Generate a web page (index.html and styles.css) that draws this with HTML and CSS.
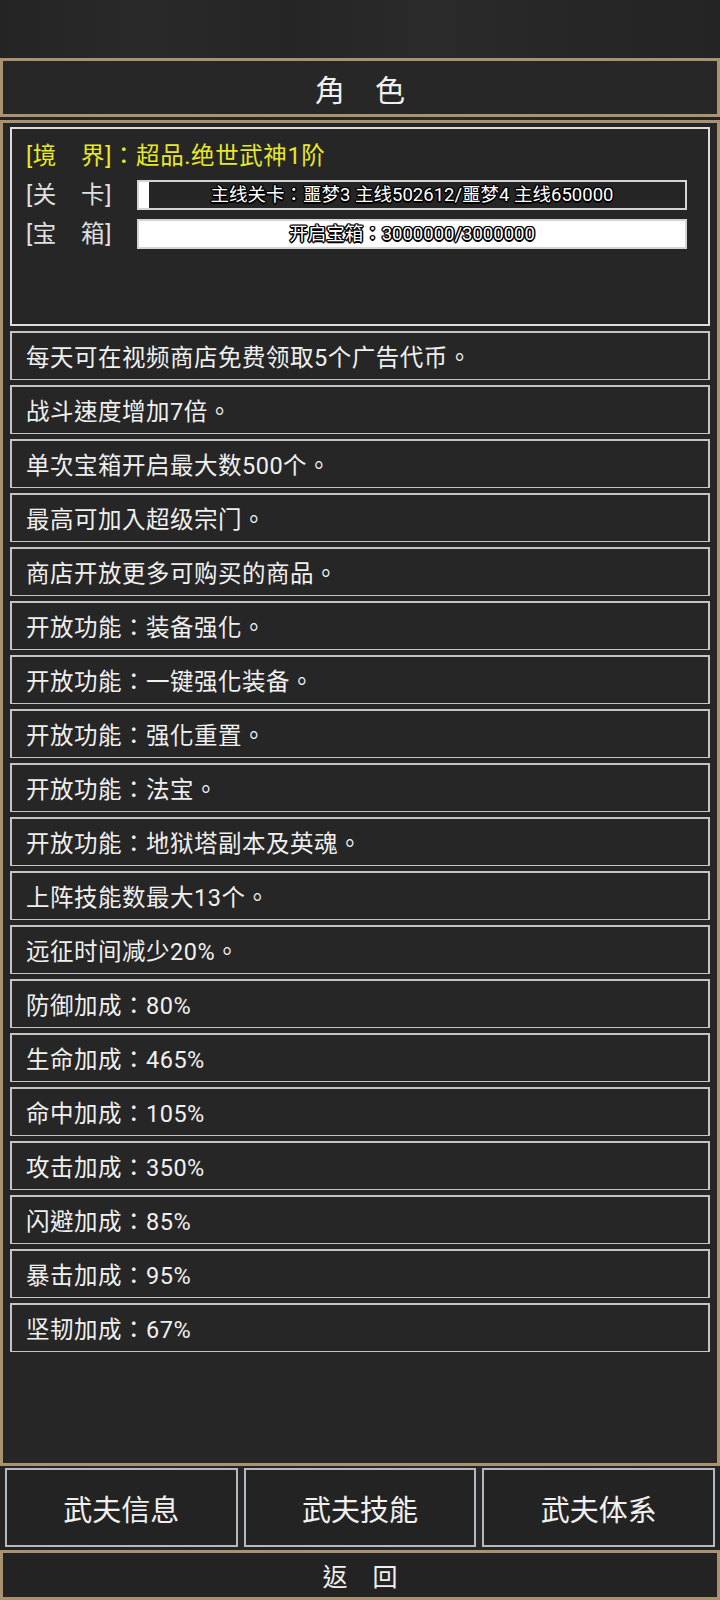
FILE: index.html
```html
<!DOCTYPE html>
<html lang="zh-CN">
<head>
<meta charset="utf-8">
<title>角色</title>
<link rel="stylesheet" href="styles.css">
</head>
<body>
<div class="page">
  <div class="title-bar">角　色</div>
  <div class="main">
    <div class="info">
      <div class="info-line realm">[境　界]：超品.绝世武神1阶</div>
      <div class="info-line">
        <span class="label">[关　卡]</span>
        <div class="bar">
          <div class="fill" style="width:10px"></div>
          <div class="bar-text">主线关卡：噩梦3 主线502612/噩梦4 主线650000</div>
        </div>
      </div>
      <div class="info-line">
        <span class="label">[宝　箱]</span>
        <div class="bar">
          <div class="fill" style="width:100%"></div>
          <div class="bar-text">开启宝箱：3000000/3000000</div>
        </div>
      </div>
    </div>
    <div class="list">
      <div class="row">每天可在视频商店免费领取5个广告代币。</div>
      <div class="row">战斗速度增加7倍。</div>
      <div class="row">单次宝箱开启最大数500个。</div>
      <div class="row">最高可加入超级宗门。</div>
      <div class="row">商店开放更多可购买的商品。</div>
      <div class="row">开放功能：装备强化。</div>
      <div class="row">开放功能：一键强化装备。</div>
      <div class="row">开放功能：强化重置。</div>
      <div class="row">开放功能：法宝。</div>
      <div class="row">开放功能：地狱塔副本及英魂。</div>
      <div class="row">上阵技能数最大13个。</div>
      <div class="row">远征时间减少20%。</div>
      <div class="row">防御加成：80%</div>
      <div class="row">生命加成：465%</div>
      <div class="row">命中加成：105%</div>
      <div class="row">攻击加成：350%</div>
      <div class="row">闪避加成：85%</div>
      <div class="row">暴击加成：95%</div>
      <div class="row">坚韧加成：67%</div>
    </div>
  </div>
  <div class="buttons">
    <div class="btn">武夫信息</div>
    <div class="btn">武夫技能</div>
    <div class="btn">武夫体系</div>
  </div>
  <div class="back">返　回</div>
</div>
</body>
</html>
```

FILE: styles.css
```css
* { box-sizing: border-box; }

html, body {
  margin: 0;
  padding: 0;
}

body {
  background: #262626;
  font-family: Roboto, "Noto Sans CJK TC", "Noto Sans CJK SC", sans-serif;
  font-feature-settings: "locl" 0;
  color: #e8e8e8;
}

.page {
  width: 720px;
  height: 1600px;
  display: flex;
  flex-direction: column;
  padding-top: 58px;
  background: linear-gradient(90deg, #242424 0%, #292929 20%, #252525 40%, #2a2a2a 60%, #262626 80%, #242424 100%);
  overflow: hidden;
}

.title-bar {
  height: 59px;
  border: 3px solid #a8926f;
  display: flex;
  align-items: center;
  justify-content: center;
  font-size: 30px;
  color: #f0f0f0;
  background: #272727;
}

.main {
  margin-top: 3px;
  height: 1346px;
  border: 3px solid #a8926f;
  padding: 4px 7px 0 7px;
  display: flex;
  flex-direction: column;
  background: #262626;
}

.info {
  height: 199px;
  border: 2px solid #dcdcdc;
  padding: 12px 21px 0 14px;
  display: flex;
  flex-direction: column;
  gap: 9px;
}

.info-line {
  height: 30px;
  display: flex;
  align-items: center;
  font-size: 23.5px;
  letter-spacing: 0.6px;
  color: #e0e0e0;
  line-height: 30px;
}

.realm {
  color: #e8e82a;
}

.label {
  width: 111px;
  flex: none;
}

.bar {
  flex: 1;
  height: 30px;
  border: 2px solid #d4d4d4;
  display: grid;
  background: #252525;
  letter-spacing: 0;
}

.fill {
  grid-area: 1 / 1;
  background: #ffffff;
  height: 100%;
}

.bar-text {
  grid-area: 1 / 1;
  text-align: center;
  font-size: 18.5px;
  line-height: 26px;
  color: #ffffff;
  text-shadow:
    -1px -1px 0 #000, 1px -1px 0 #000, -1px 1px 0 #000, 1px 1px 0 #000,
    0 -1.5px 0 #000, 0 1.5px 0 #000, -1.5px 0 0 #000, 1.5px 0 0 #000;
  white-space: nowrap;
}

.list {
  margin-top: 5px;
  display: flex;
  flex-direction: column;
  gap: 5px;
}

.row {
  height: 49px;
  border: 2px solid #c4c4c4;
  border-bottom-width: 1px;
  padding-left: 14px;
  display: flex;
  align-items: center;
  font-size: 23.5px;
  letter-spacing: 0.5px;
  color: #f0f0f0;
}

.buttons {
  margin-top: 2px;
  height: 79px;
  padding: 0 5px;
  display: grid;
  grid-template-columns: 1fr 1fr 1fr;
  gap: 6px;
}

.btn {
  border: 2px solid #b4b9c1;
  background: #232323;
  display: flex;
  align-items: center;
  justify-content: center;
  font-size: 29px;
  color: #f0f0f0;
}

.back {
  margin-top: 3px;
  height: 50px;
  border: 3px solid #a8926f;
  display: flex;
  align-items: center;
  justify-content: center;
  font-size: 25px;
  color: #f0f0f0;
  background: #232323;
}
```
